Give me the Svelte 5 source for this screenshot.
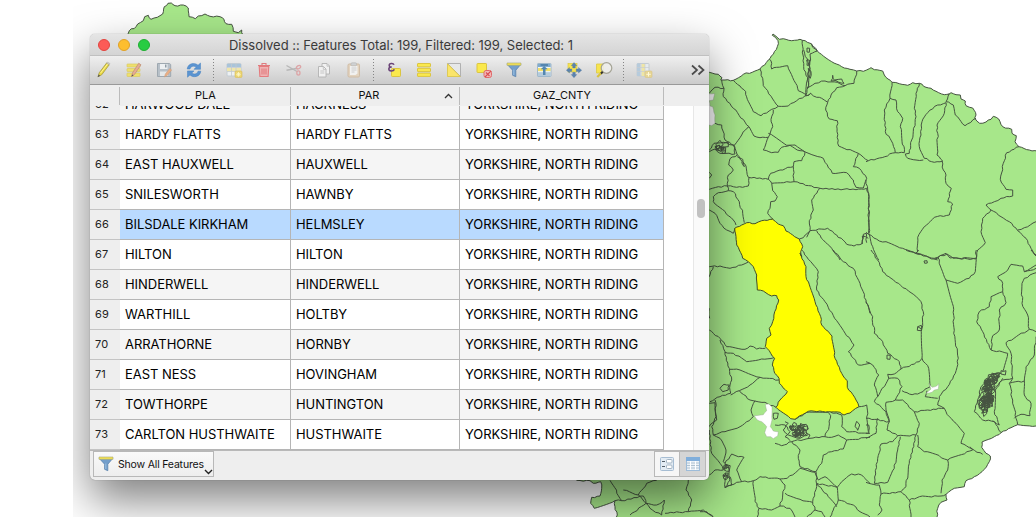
<script>
  // Each sheet is drawn at three times map scale from its own origin.
  const sheets = {
    north: [700, 0], coast: [866, 0], south: [700, 250],
    east: [866, 250], corner: [560, 400], hill: [70, 0]
  };

  function place(sheet, text) {
    const [ox, oy] = sheets[sheet];
    return text.trim().split(/\s+/).map((p) => {
      const [x, y] = p.split(',').map(Number);
      return [ox + x / 3, oy + y / 3];
    });
  }

  // Adds small irregular bends so that borders read as surveyed lines.
  function rough(points, amount = 0.75) {
    let d = `M${points[0][0].toFixed(1)} ${points[0][1].toFixed(1)}`;
    for (let i = 1; i < points.length; i++) {
      const [ax, ay] = points[i - 1];
      const [bx, by] = points[i];
      const len = Math.hypot(bx - ax, by - ay);
      const n = len > 90 ? 1 : Math.max(1, Math.round(len / 3));
      for (let k = 1; k <= n; k++) {
        const t = k / n;
        const h = Math.sin((ax * 12.9 + ay * 78.2 + k * 37.7)) * 43758.5;
        const r = k === n ? 0 : (h - Math.floor(h) - 0.5) * 2 * amount;
        const x = ax + (bx - ax) * t - ((by - ay) / (len || 1)) * r;
        const y = ay + (by - ay) * t + ((bx - ax) / (len || 1)) * r;
        d += `L${x.toFixed(1)} ${y.toFixed(1)}`;
      }
    }
    return d;
  }

  const land = rough([
    [600, 71], [705, 71],
    ...place('north', '28,217 45,222 55,223 66,233 62,240 75,240 100,241 130,223 165,213 180,207 205,180 220,163 232,140 234,122 226,112 217,106 219,102 228,109 238,118 250,116 275,122 300,118 322,127 334,131 338,142 352,153 370,168 395,185 425,200 450,208 470,213 490,214 508,206'),
    ...place('coast', '15,203 25,209 50,213 55,225 66,237 78,247 100,251 125,256 140,248 160,250 180,262 195,265 210,274 235,284 250,282 255,278 270,284 283,285 285,297 298,303 300,317 320,324 330,345 326,354 341,370 360,366 375,358 382,349 398,357 410,380 437,388 438,400 451,407 447,425 459,440 490,450 515,454'),
    [1042, 152], [1042, 426],
    ...place('east', '510,528 480,527 455,524 435,533 405,548 385,560 348,576 347,592 360,610 373,618 370,635 355,658 325,680 300,692 295,710 265,715 240,733 243,750 225,757 215,775 212,810'),
    [936, 522], [612, 522],
    ...place('corner', '172,345 165,320 165,302 103,325 92,310 95,292 120,288 125,265 122,245 100,250 90,242 50,241'),
    [577, 470], [600, 300], [600, 71]
  ]);

  const hill = rough(place('hill', '165,115 175,100 178,92 198,80 203,72 220,62 224,50 235,46 243,58 262,52 278,42 283,20 294,10 304,9 315,17 340,15 355,24 357,50 376,56 385,48 405,42 420,49 450,50 462,58 468,71 485,73 490,94 505,98 515,90 519,105 519,120'));

  const yellow = rough([
    ...place('north', '104,685 125,675 140,668 165,671 185,662 218,658 235,672 250,677 258,693 278,705 298,717 308,740 302,755 305,770'),
    ...place('south', '300,10 318,50 318,80 345,155 362,200 365,225 396,258 405,325 425,370 442,392 442,412 468,450 477,470 458,482 450,489 432,495 420,487 385,485 325,484 298,498 285,508 272,506 228,472 240,450 262,425 238,400 237,385 224,370 217,345 224,325 212,310 196,290 200,265 213,255 208,235 218,215 224,185 236,150 230,137 215,138 190,123 172,120 170,75 160,50 145,35 128,25 118,0'),
    ...place('north', '110,735 108,710 104,685')
  ], 0.55);

  const borders = {
    north: [
      '65,240 72,265 70,290 100,325 147,380 162,408 180,413 205,412 218,380 213,358 220,330',
      '28,280 45,262 72,265', '100,241 120,258 137,275 142,298 160,335 183,347 215,328 235,319',
      '180,207 188,235 190,257 218,297 235,319 265,318 290,302 332,280 320,287 295,272 287,250 270,215 263,197 230,202 215,207 215,190 208,177',
      '307,121 311,200 326,250 317,287', '311,150 330,205 322,240 317,287', '334,131 352,153 330,162 330,225 322,265',
      '320,180 328,180 329,195 321,196 320,180', '321,144 329,145 328,157 321,156 321,144', '325,205 333,215 331,235 325,228 325,205',
      '322,263 345,250 375,243 412,247 435,257 410,263 397,278 383,307 365,295 350,292 332,280',
      '470,213 462,250 435,257', '393,243 398,226 404,242 393,243', '404,240 425,237 432,250 415,246 404,240',
      '383,307 377,330 388,357 412,362 411,395 416,438 475,460 505,482',
      '45,370 65,375 75,420 103,436 125,405 130,395 147,380',
      '205,412 190,450 215,458 235,457 245,442 270,436 300,452 318,457 345,467 370,475 375,487 397,520 440,518 460,540 468,562 490,564 500,535 478,505 460,500 475,460',
      '205,400 260,436 285,435 315,457', '103,436 112,465 138,498 145,532 205,538 215,550 260,545 282,545 300,550 360,565 468,569 500,565 506,580 507,700',
      '205,538 212,520 240,510 280,500 282,485 305,482 315,457', '280,500 282,545',
      '28,450 42,430 70,427 100,435 105,462 60,460 45,447 28,455', '45,440 58,435 64,450 50,450 45,440', '70,430 85,427 85,440 72,441',
      '112,465 90,476 86,495 100,510 85,525 82,558 110,562 145,558 147,533', '112,470 128,478 133,500 125,485', '28,568 55,560 82,558 85,572 55,578 40,590 40,605 100,660 108,675',
      '85,572 100,575 118,605 128,640 133,668', '28,630 45,640 60,670 80,690 100,700 104,685', '28,517 35,525 28,535',
      '215,550 218,572 232,590 225,603 212,605 210,625 203,640 220,658', '360,565 335,600 340,630 328,662 330,692 310,713 298,717',
      '330,692 383,685 410,705 440,733 462,738 485,732 487,708 505,715', '330,692 320,712', '350,692 370,720 395,745 420,780', '487,732 490,703 499,700 500,728'
    ],
    coast: [
      '78,247 72,295 55,330 58,395 80,430 88,458 115,458 103,380 110,355 95,335 90,300 72,295', '160,250 150,280 145,325 150,350 137,420 130,460 118,462',
      '250,280 240,305 262,315 268,345 297,377 330,355', '240,308 215,315 185,338 168,365 165,405 160,440 175,475 205,487 230,483 213,465 215,400 213,375 235,340 240,308',
      '0,485 40,474 88,458', '118,462 125,475 150,480 172,480', '228,483 232,510 240,525 240,550 256,565 245,605 260,612 250,645 205,652 175,680 155,712 155,755 148,760',
      '0,697 40,723 60,725 110,745 148,760 205,777 240,760 252,774 330,775 335,750 358,728 345,695 350,655 375,630 360,615 385,605 405,595 440,588 440,570 420,568 403,538 412,490 422,458 459,440',
      '375,630 405,650 430,665 455,692 480,715 495,745 510,768', '455,690 475,683 510,665', '0,540 5,570 8,590 8,700 20,740 38,780', '205,777 215,780'
    ],
    south: [
      '28,50 60,48 90,55 125,45 145,36', '28,240 60,265 80,290 135,298 150,288 170,297 196,295', '40,50 28,80', '60,270 75,305 95,390 90,405 92,430 60,440 30,455',
      '75,307 100,310 140,335 185,327 222,323', '90,358 120,360 180,382 237,390', '180,382 150,405 118,422 92,435', '60,415 72,403 88,405 85,420 68,425 60,415',
      '118,422 150,450 195,457 228,472', '165,452 153,480 160,500 148,512 120,530 75,545 40,555 35,530 48,500 45,458 28,460', '40,555 60,565 78,600 70,635 85,650 90,690 75,713 110,697 160,692 180,680 240,687 262,685 300,655 345,667 355,690 375,680 412,712 425,695 455,672 485,675 510,700',
      '28,540 35,610 60,640 70,660 45,660 28,675', '75,640 95,612 115,620 132,622 110,660 125,695', '75,685 90,680 95,705 75,713 75,685',
      '285,508 320,487 385,487 392,497 387,530 375,560 330,565 275,575 245,587 225,580', '392,487 425,495 425,530 440,545 510,550', '477,470 500,465 505,545', '375,560 395,562 415,555 440,570 510,562',
      '465,530 470,514 479,525 473,541 465,530', '275,575 300,600 295,625 300,650 330,660 348,665 365,640 370,615 395,605 430,597 440,570',
      '160,692 165,755 177,775 215,780 240,768 248,735 255,705 240,687', '177,775 172,801', '348,665 350,710 338,755 345,780 320,801', '255,730 300,748 338,757', '240,768 270,775 285,801',
      '350,700 385,740 410,770', '350,700 412,712 415,750 460,765 480,785 510,801', '415,750 400,780 390,801', '345,780 365,785 375,801',
      '305,0 325,28 355,65 350,120 375,155 410,212 462,285 445,305 475,345 510,340', '400,0 430,35 460,55 480,100 498,150 510,190',
      '220,490 235,490 232,505 222,508 220,490', '225,525 255,525 270,545 255,560 270,572', '255,515 265,520 250,540 265,555 300,565 320,550 330,555 325,565',
      '0,785 20,785 40,801', '28,175 29,205'
    ],
    east: [
      '15,0 35,30 50,65 75,85 135,128 165,155 172,185 168,235 168,325 160,335 105,357 85,372 65,373 68,385 35,440 25,455 60,485 70,515',
      '120,0 150,10 205,25 215,22 240,90 263,178 263,250 277,325 268,370 245,410 220,440 215,465 235,475', '240,90 275,100 310,85 328,65 331,0', '215,22 243,12 262,25 330,27',
      '150,10 158,0', '174,33 183,32 184,39 176,40 174,33', '155,230 166,226 165,242 154,241 155,230 165,236', '0,155 20,200 25,250 50,275 65,310 100,335 105,357',
      '63,315 73,316 72,328 63,327 63,315', '168,325 188,355 193,410 155,432 130,432 108,422', '68,385 95,385 108,410 88,450 60,457 60,480 70,515 63,540 95,557 150,555 160,520 145,485 110,450 88,450',
      '215,445 178,440 183,422', '235,475 185,480 145,485', '235,475 250,500 270,520 295,550 285,580 310,593 350,613', '155,555 155,590 175,605 200,610 245,630 320,600 312,590',
      '0,335 20,345 38,375 25,405 35,440', '0,505 70,515', '35,505 30,550 0,565', '0,525 8,525 8,550 0,550', '95,557 80,575 45,582 35,625 25,700 65,697 85,655 95,600 103,560',
      '150,555 130,640 120,710 105,725 45,732 40,705 0,697', '245,630 245,660 228,690 225,730', '45,732 40,765 48,780 35,795', '105,725 130,750 135,801', '130,750 160,740 225,738 240,733',
      '510,55 475,65 470,48 435,43 425,60 395,80 410,100 410,125 375,140 370,170 340,185 332,215 350,245 375,300 380,257 400,240 400,180 420,158 410,125',
      '510,45 475,65', '510,68 475,85 468,100 468,160 485,195 490,238 510,245', '375,300 425,310 410,365', '490,238 420,278 435,310 440,385 410,390 390,410', '440,385 430,400 440,450 455,524', '430,400 475,393 475,435 495,460 492,497 465,493 445,505',
      '475,393 480,350 505,315 510,260', '405,548 395,530 380,512', '495,0 510,15', '405,362 420,362 418,375 405,372 405,362',
      '405,370 380,373 345,410 335,450 325,485 350,510 385,515 400,525 385,485 388,420 410,385'
    ],
    corner: [
      '150,241 185,302 165,302', '185,302 250,288 258,310 210,345', '258,310 235,285 190,270', '258,310 290,315 313,300 305,345 270,325 258,310', '385,240 378,270 395,300 385,335 430,330 460,350', '235,285 260,250 290,241',
      '447,80 470,60 465,0', '315,340 385,335'
    ]
  };

  const lines = Object.entries(borders).map(([k, list]) =>
    list.map((s) => rough(place(k, s))).join('')).join('');

  let seed = 7;
  const rand = () => {
    seed = (seed * 16807) % 2147483647;
    return seed / 2147483647;
  };

  // Dense town plots: small irregular closed parcels scattered in a leaning ellipse.
  function plots(cx, cy, rx, ry, lean, n) {
    let d = '';
    for (let i = 0; i < n; i++) {
      const a = rand() * Math.PI * 2;
      const r = Math.sqrt(rand());
      const y = cy + Math.sin(a) * r * ry;
      const x = cx + Math.cos(a) * r * rx - (y - cy) * lean;
      const s = 1 + rand() * 2.2;
      const k = 4 + Math.floor(rand() * 3);
      for (let j = 0; j < k; j++) {
        const b = (j / k) * Math.PI * 2 + rand();
        const q = s * (0.5 + rand());
        d += `${j ? 'L' : 'M'}${(x + Math.cos(b) * q).toFixed(1)} ${(y + Math.sin(b) * q).toFixed(1)}`;
      }
      d += 'Z';
    }
    return d;
  }
  const towns = plots(987, 397, 6, 17, 0.15, 75) + plots(993, 379, 5, 5, 0.6, 16) + plots(797, 430, 9, 5.5, 0, 30) + plots(719, 148, 6, 3.5, 0, 6) + plots(726, 472, 2, 7, 0, 6);

  const gaps = [
    rough(place('north', '10,283 44,281 40,300 28,302 30,318 38,320 45,345 45,370 35,377 10,375 10,283'), 0.4),
    rough(place('south', '196,463 207,462 216,472 216,510 211,530 220,543 235,545 233,558 220,566 212,560 200,560 194,548 200,530 185,515 172,510 163,497 190,494 200,482 196,463'), 0.3),
    rough(place('east', '188,400 198,412 212,408 218,401 217,418 205,420 198,427 180,430 195,417 188,400'), 0.2)
  ];

  const county = 'YORKSHIRE, NORTH RIDING';
  const rows = [
    [62, 'HARWOOD DALE', 'HACKNESS'], [63, 'HARDY FLATTS', 'HARDY FLATTS'], [64, 'EAST HAUXWELL', 'HAUXWELL'],
    [65, 'SNILESWORTH', 'HAWNBY'], [66, 'BILSDALE KIRKHAM', 'HELMSLEY'], [67, 'HILTON', 'HILTON'],
    [68, 'HINDERWELL', 'HINDERWELL'], [69, 'WARTHILL', 'HOLTBY'], [70, 'ARRATHORNE', 'HORNBY'],
    [71, 'EAST NESS', 'HOVINGHAM'], [72, 'TOWTHORPE', 'HUNTINGTON'], [73, 'CARLTON HUSTHWAITE', 'HUSTHWAITE']
  ];

  const tools = ['pencil', 'multi', 'save', 'reload', '|', 'add', 'trash', 'cut', 'copy', 'paste', '|',
    'expr', 'all', 'invert', 'deselect', 'funnel', 'top', 'pan', 'zoom', '|', 'fields'];
</script>

{#snippet icon(name)}
  <svg class="icon" width="20" height="20" viewBox="0 0 20 20" fill="none">
    {#if name === 'pencil'}
      <path d="M4 16.8l1.2-4L12.6 3l2.6 1.8-7.5 10z" fill="#e9d73f" stroke="#a39a45" stroke-width=".8" />
      <path d="M6.5 13.2L13.6 4" stroke="#fff59a" /><path d="M3.6 17.2l1-2.6 1.6 1.2z" fill="#555" />
      <path d="M12.6 3l.9-1 2.5 1.7-.8 1.1z" fill="#d4d0c0" stroke="#aaa" stroke-width=".5" />
    {:else if name === 'multi'}
      <g fill="#eee06c" stroke="#d9c965" stroke-width=".7"><rect x="3" y="4" width="13" height="3" rx=".6" /><rect x="3" y="8.5" width="13" height="3" rx=".6" /><rect x="3" y="13" width="13" height="3.5" rx=".6" /></g>
      <path d="M7.5 16.5l1-3.7 6.2-9.500 2.300 1.500-6.300 9.400z" fill="#e7ad91" stroke="#bd8d78" stroke-width=".7" /><path d="M7.500 16.500l.7-2 1.400 1z" fill="#555" />
    {:else if name === 'save'}
      <path d="M3.500 3.500h12l1.200 1v12H3.500z" fill="#b7c0c8" stroke="#9ea8b0" /><path d="M6 4h7.500v5H6z" fill="#edf0f2" /><path d="M6 11.500h8V16H6z" fill="#e5e8e9" /><path d="M11 4.500h1.500v3H11z" fill="#8f9ca6" />
      <path d="M10.500 17l.8-3 4.500-5.500 1.800 1.400-4.400 5.700z" fill="#eaae84" stroke="#c69b7d" stroke-width=".5" />
    {:else if name === 'reload'}
      <path d="M3.200 9C3.600 5.700 6 3.500 9.400 3.500c2 0 3.500.7 4.600 1.800L16.500 3v6.300H10l2.200-2.200c-.7-.6-1.600-.9-2.600-.9-1.900 0-3.200 1.100-3.600 2.800z" fill="#5b94d1" stroke="#4380c1" stroke-width=".5" />
      <path d="M16.800 11.200c-.4 3.300-2.800 5.500-6.200 5.500-2 0-3.500-.7-4.600-1.800l-2.500 2.300v-6.300H10l-2.200 2.200c.7.6 1.600.9 2.600.9 1.900 0 3.200-1.100 3.600-2.800z" fill="#5b94d1" stroke="#4380c1" stroke-width=".5" />
    {:else if name === 'add'}
      <rect x="3" y="3.500" width="14" height="12.500" rx="1" fill="#edf0f2" stroke="#c2ccd4" /><path d="M3 4h14v3H3z" fill="#a9c4da" /><path d="M3 8h14v3.500H3z" fill="#efe6ac" /><path d="M7.500 4v12M12 4v12M3 11.500h14M3 7.500h14" stroke="#c3cace" stroke-width=".8" />
      <rect x="11" y="11" width="7" height="6.500" rx="1" fill="#ead56f" stroke="#d8bc5e" stroke-width=".6" /><path d="M14.500 12v4.600M12.200 14.300h4.600M13 12.800l3 3M16 12.800l-3 3" stroke="#fff8c8" stroke-width=".8" />
    {:else if name === 'trash'}
      <path d="M5.200 6.500h9.600l-.7 10H5.900z" fill="#efb3b4" stroke="#e47b7e" stroke-width="1.100" /><path d="M4 5.500h12M8 5V3.500h4V5M8 8.500v6M10 8.500v6M12 8.500v6" stroke="#e17a7d" stroke-width="1.100" />
    {:else if name === 'cut'}
      <path d="M2.500 5.500L13 11.500M2.500 10.200l11-2" stroke="#b7b7b7" stroke-width="1.400" /><ellipse cx="14.500" cy="7.200" rx="2.300" ry="1.500" stroke="#dda4a6" stroke-width="1.300" transform="rotate(-30 14.500 7.200)" /><ellipse cx="14.400" cy="13" rx="1.600" ry="2.100" stroke="#dda4a6" stroke-width="1.300" />
    {:else if name === 'copy'}
      <g fill="#f1f1f1" stroke="#b2b2b2" stroke-width=".9"><path d="M8 3.500h5l2.500 2.500v8H8z" /><path d="M4.500 6.500h5L12 9v8H4.500z" /></g><path d="M9.300 6.800v2.600h2.600M6.300 11h4M6.300 13h4M13 3.800v2.400h2.400" stroke="#bbb" stroke-width=".8" />
    {:else if name === 'paste'}
      <rect x="4" y="4" width="11.500" height="13" rx="1.200" fill="#e2d3bf" stroke="#d0bca5" /><path d="M6 6h7.500v7.500L11.500 15H6z" fill="#f1f1f0" /><rect x="7" y="2.800" width="5.500" height="3" rx="1" fill="#cfd1d2" stroke="#b5b5b5" stroke-width=".6" /><path d="M7.500 8h5M7.500 10h5M7.500 12h3" stroke="#c4c4c4" stroke-width=".8" />
    {:else if name === 'expr'}
      <rect x="7.500" y="8.500" width="9" height="8" rx=".8" fill="#fae94d" stroke="#dbc541" /><path d="M10 4.700C9.300 3 5.200 3 5.200 5.400c0 1.200 1 1.600 2.600 1.600-2 0-3 .8-3 2 0 2.500 4.600 2.500 5.600.4" stroke="#6a4377" stroke-width="1.500" />
    {:else if name === 'all'}
      <g fill="#fae94d" stroke="#dbc541"><rect x="3.500" y="3.500" width="13" height="3.300" rx=".5" /><rect x="3.500" y="8.300" width="13" height="3.300" rx=".5" /><rect x="3.500" y="13.100" width="13" height="3.300" rx=".5" /></g>
    {:else if name === 'invert'}
      <path d="M3.500 3.500l13 13V3.500z" fill="#e6e8e9" stroke="#aaa" stroke-width=".9" /><path d="M3.500 3.800l12.700 12.700H3.500z" fill="#fae56a" stroke="#dbc541" stroke-width=".8" />
    {:else if name === 'deselect'}
      <rect x="3" y="3.500" width="9.500" height="9" rx=".6" fill="#fae94d" stroke="#dbc541" /><rect x="10" y="10.500" width="7.500" height="7" rx="2" fill="#f3b7b7" stroke="#e06a6b" /><path d="M11 17l6-6M12 12.500l3.500 3.500" stroke="#d94f51" stroke-width="1.100" />
    {:else if name === 'funnel'}
      <path d="M3.300 4.500h13.400l-4.900 5.700v6.500l-3.200-1.400v-5.100z" fill="#739ecb" stroke="#5a83ad" stroke-width=".8" /><path d="M3 3h14v2.300H3z" fill="#f5e253" stroke="#a5a876" stroke-width=".6" /><path d="M9.800 9.500v5.500" stroke="#9cc0e2" />
    {:else if name === 'top'}
      <rect x="3.500" y="3.500" width="13.500" height="13" rx=".6" fill="#dfe8ee" stroke="#9fb8cb" /><path d="M4 4h12.500v3H4z" fill="#7fabce" /><path d="M4 8h12.500v3.300H4z" fill="#f3e06a" /><path d="M4 12h12.500v4H4z" fill="#b4cbdc" /><path d="M4 7.500h12.500M4 11.700h12.500" stroke="#f4f7f9" stroke-width=".8" /><path d="M10.200 6l3.500 3.300h-2.200V15H9V9.300H6.700z" fill="#5387b1" /><path d="M6.500 5h7.500" stroke="#396e9c" stroke-width="1.200" />
    {:else if name === 'pan'}
      <rect x="4" y="3.500" width="9" height="8.500" fill="#f7e44f" stroke="#dcc945" stroke-width=".7" /><g fill="#5b83ae" stroke="#47709c" stroke-width=".3"><path d="M10 2.500l2.800 3.200h-1.500V8H8.700V5.700H7.200z" /><path d="M10 17.800l2.800-3.200h-1.500v-2.300H8.700v2.300H7.200z" /><path d="M2.300 10.200l3.200-2.800v1.500h2.300v2.600H5.500V13z" /><path d="M17.700 10.200l-3.200-2.800v1.500h-2.300v2.600h2.300V13z" /></g>
    {:else if name === 'zoom'}
      <path d="M2.500 4h7v9h-7z" fill="#f7e44f" stroke="#dcc945" stroke-width=".8" /><circle cx="12.500" cy="8" r="5.300" fill="#eeeeea" fill-opacity=".88" stroke="#a5a496" stroke-width="1.200" /><path d="M8.700 11.700l-2 2" stroke="#333" stroke-width="2" /><path d="M6.800 13.400l-3.500 3.600" stroke="#d8c33d" stroke-width="2.200" />
    {:else if name === 'fields'}
      <rect x="3" y="3.500" width="12" height="12.500" rx=".8" fill="#e6ebee" stroke="#c4ccd2" /><path d="M3 3.500h3.500V16H3z" fill="#b6cbdc" /><path d="M7.500 4h3.500v12H7.500z" fill="#efe6a5" /><path d="M3 7.500h12M3 11.500h12M7 4v12M11 4v12" stroke="#c8cdd0" stroke-width=".7" /><rect x="11" y="11" width="7" height="6.500" rx="1" fill="#e6d695" stroke="#d8c587" stroke-width=".6" /><path d="M14.500 12v4.500M12.300 14.300h4.500" stroke="#fff8d8" />
    {/if}
  </svg>
{/snippet}

<main class="stage">
  <svg class="map" width="1036" height="517" viewBox="0 0 1036 517">
    <g stroke="#465441" stroke-width="1" stroke-linejoin="round">
      <path d={hill} fill="#a7e78a" />
      <path d={land} fill="#a7e78a" />
      <path d={lines} fill="none" />
      <path d={towns} fill="none" />
      <path d={yellow} fill="#ffff00" stroke="#44502a" />
    </g>
    {#each gaps as g}<path d={g} fill="#fff" stroke="#8f9f88" stroke-width=".4" />{/each}
  </svg>

  <section class="window">
    <header class="title">
      <div class="lights"><i class="close"></i><i class="min"></i><i class="max"></i></div>
      <span>Dissolved :: Features Total: 199, Filtered: 199, Selected: 1</span>
    </header>
    <div class="toolbar">
      {#each tools as t}
        {#if t === '|'}<i class="sep"></i>{:else}<button class="tool" aria-label={t}>{@render icon(t)}</button>{/if}
      {/each}
      <svg class="more" width="14" height="12" viewBox="0 0 14 12" fill="none" stroke="#4b4b4b" stroke-width="1.700"><path d="M1 1.500l5 4.500-5 4.500M7.500 1.500l5 4.500-5 4.500" /></svg>
    </div>
    <div class="grid heads">
      <span></span><span class="h">PLA</span>
      <span class="h">PAR<svg width="9" height="6" viewBox="0 0 9 6" fill="none" stroke="#333" stroke-width="1.300"><path d="M1 5l3.500-3.500L8 5" /></svg></span>
      <span class="h">GAZ_CNTY</span><span class="h"></span>
    </div>
    <div class="body">
      <div class="rows">
        {#each rows as [n, pla, par], i}
          <div class="grid row" class:alt={i % 2 === 0} class:selected={n === 66}>
            <span class="num">{n}</span><span class="cell">{pla}</span><span class="cell">{par}</span><span class="cell">{county}</span>
          </div>
        {/each}
      </div>
      <div class="scroll"><i></i></div>
    </div>
    <footer>
      <button class="filter">{@render icon('funnel')}<span>Show All Features</span>
        <svg class="chev" width="9" height="6" viewBox="0 0 9 6" fill="none" stroke="#222" stroke-width="1.400"><path d="M1 1l3.500 3.500L8 1" /></svg>
      </button>
      <div class="views">
        <button aria-label="Form view">
          <svg width="14" height="14" viewBox="0 0 14 14" fill="none"><rect x=".5" y=".5" width="13" height="13" rx="1" fill="#e3ecf4" stroke="#a6bdd3" /><path d="M2 4.500h3M2 9.500h3" stroke="#535e68" stroke-width="1.100" /><rect x="6.500" y="2.500" width="5.500" height="3.500" rx="1" fill="#fff" stroke="#a3b4c3" /><rect x="6.500" y="8" width="5.500" height="3.500" rx="1" fill="#fff" stroke="#a3b4c3" /></svg>
        </button>
        <button class="on" aria-label="Table view">
          <svg width="14" height="14" viewBox="0 0 14 14" fill="none"><rect x=".5" y=".5" width="13" height="13" fill="#eaf1f7" stroke="#9dbcd9" /><path d="M0 0h14v4H0z" fill="#80aedb" /><path d="M1 6h12M1 8.500h12M1 11h12" stroke="#a9bccb" stroke-width=".9" /><path d="M4.500 4v9M9.500 4v9" stroke="#fff" /></svg>
        </button>
      </div>
    </footer>
  </section>
</main>

<style>
  :global(body) { background: #fff; }
  .stage { box-sizing: border-box; width: 963px; height: 517px; margin-left: 73px; padding: 34px 0 0 17px; overflow: hidden; position: relative; font-family: Inter, "Liberation Sans", sans-serif; color: #111; }
  .map { position: absolute; left: -73px; top: 0; }
  .window { position: relative; width: 619px; height: 446px; border-radius: 5px; background: #eee; display: flex; flex-direction: column; box-shadow: 0 0 1px rgba(0,0,0,.45), 0 20px 45px rgba(0,0,0,.5); }
  .title { height: 22px; flex: none; display: grid; grid-template-columns: 1fr; align-items: center; border-radius: 5px 5px 0 0; background: linear-gradient(#e5e5e5, #d4d4d4); border-bottom: 1px solid #c0c0c0; box-sizing: border-box; }
  .title > * { grid-row: 1; grid-column: 1; }
  .title span { text-align: center; font-size: 13px; letter-spacing: -.03px; color: #3a3a3a; padding-left: 3px; padding-top: 1px; }
  .lights { display: flex; gap: 8px; padding-left: 8px; }
  .lights i { box-sizing: border-box; width: 12px; height: 12px; border-radius: 50%; }
  .close { background: #fc5b57; border: 1px solid #e2443f; }
  .min { background: #fdbe2f; border: 1px solid #e0a127; }
  .max { background: #28cc42; border: 1px solid #1eae31; }
  .toolbar { height: 29px; flex: none; box-sizing: border-box; border-bottom: 1px solid #999; background: linear-gradient(#efefef, #cbcbcb); display: flex; align-items: center; }
  button { padding: 0; margin: 0; border: 0; background: none; font: inherit; color: inherit; }
  .tool { width: 30px; height: 20px; flex: none; display: flex; justify-content: center; padding-right: 2px; }
  .icon { flex: none; }
  .sep { flex: none; width: 10px; height: 23px; background: repeating-linear-gradient(#858585 0 1px, transparent 1px 3px) 3px 0 / 1px 100% no-repeat; }
  .more { margin-left: auto; margin-right: 4px; }
  .grid { display: grid; grid-template-columns: 30px 171px 169px 204px; }
  .heads { height: 21px; flex: none; grid-template-columns: 29px 171px 169px 204px 1fr; background: #eee; font-size: 11px; text-align: center; }
  .h { box-sizing: border-box; border-left: 1px solid #bbb; height: 18px; margin-top: 2px; line-height: 17px; padding-left: 1px; display: flex; justify-content: center; position: relative; }
  .h svg { position: absolute; right: 6px; top: 6px; }
  .h:nth-child(3) { padding-right: 13px; }
  .body { height: 344px; flex: none; display: flex; background: #fff; overflow: hidden; }
  .rows { flex: 1; margin-top: -16px; }
  .row { height: 30px; line-height: 29px; font-size: 13px; letter-spacing: -.05px; }
  .num { box-sizing: border-box; background: #eee; border-bottom: 1px solid #c4c4c4; padding-left: 5px; font-size: 11px; color: #222; letter-spacing: .1px; }
  .cell { box-sizing: border-box; border-right: 1px solid #b5b5b5; border-bottom: 1px solid #b5b5b5; padding-left: 5px; white-space: nowrap; background: #fff; color: #000; }
  .alt .cell { background: #f5f5f5; }
  .selected .cell { background: #b9daff; }
  .scroll { width: 15px; border-left: 1px solid #e7e7e7; background: #fafafa; display: flex; justify-content: center; }
  .scroll i { width: 8px; height: 19px; border-radius: 4px; background: #c1c1c1; margin-top: 93px; margin-right: 1px; }
  footer { flex: 1; border-top: 1px solid #b8b8b8; display: flex; justify-content: space-between; padding: 0 3px; }
  .filter { height: 26px; width: 121px; box-sizing: border-box; border: 1px solid #b8b8b8; background: linear-gradient(#fafafa, #eee); display: flex; align-items: center; padding-left: 2px; font-size: 10.5px; gap: 2px; letter-spacing: -.18px; white-space: nowrap; }
  .filter span { width: 84px; text-align: left; }
  .chev { margin-top: 15px; flex: none; }
  .views { display: flex; }
  .views button { box-sizing: border-box; width: 26px; height: 26px; border: 1px solid #b8b8b8; background: #f6f6f6; display: flex; align-items: center; justify-content: center; }
  .views .on { background: #d5d5d5; border-left: 0; }
</style>
